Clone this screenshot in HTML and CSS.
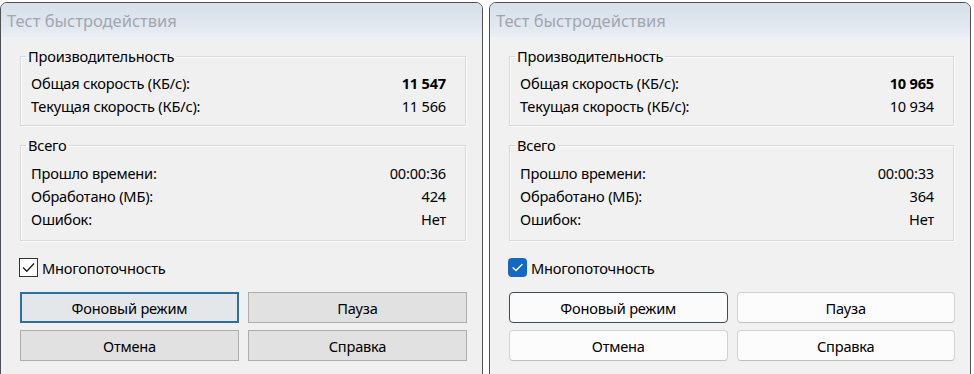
FILE: index.html
```html
<!DOCTYPE html>
<html lang="ru">
<head>
<meta charset="utf-8">
<title>Тест быстродействия</title>
<link rel="stylesheet" href="styles.css">
</head>
<body>
<div class="screen">
  <section class="win classic">
    <header class="titlebar">Тест быстродействия</header>
    <div class="client">
      <fieldset class="group g1">
        <legend>Производительность</legend>
        <div class="row"><span>Общая скорость (КБ/с):</span><b>11 547</b></div>
        <div class="row"><span>Текущая скорость (КБ/с):</span><span>11 566</span></div>
      </fieldset>
      <fieldset class="group g2">
        <legend>Всего</legend>
        <div class="row"><span>Прошло времени:</span><span>00:00:36</span></div>
        <div class="row"><span>Обработано (МБ):</span><span>424</span></div>
        <div class="row"><span>Ошибок:</span><span>Нет</span></div>
      </fieldset>
      <div class="check">
        <span class="box"><svg viewBox="0 0 19 19" width="19" height="19"><path d="M4 9.5 L7.8 13.3 L15 5.5" fill="none" stroke="#1a1a1a" stroke-width="1.3"/></svg></span>
        <span>Многопоточность</span>
      </div>
      <div class="buttons">
        <button class="btn focus">Фоновый режим</button>
        <button class="btn">Пауза</button>
        <button class="btn">Отмена</button>
        <button class="btn">Справка</button>
      </div>
    </div>
  </section>
  <section class="win modern">
    <header class="titlebar">Тест быстродействия</header>
    <div class="client">
      <fieldset class="group g1">
        <legend>Производительность</legend>
        <div class="row"><span>Общая скорость (КБ/с):</span><b>10 965</b></div>
        <div class="row"><span>Текущая скорость (КБ/с):</span><span>10 934</span></div>
      </fieldset>
      <fieldset class="group g2">
        <legend>Всего</legend>
        <div class="row"><span>Прошло времени:</span><span>00:00:33</span></div>
        <div class="row"><span>Обработано (МБ):</span><span>364</span></div>
        <div class="row"><span>Ошибок:</span><span>Нет</span></div>
      </fieldset>
      <div class="check">
        <span class="box"><svg viewBox="0 0 19 19" width="19" height="19"><path d="M5 9.8 L8 12.6 L14 6.4" fill="none" stroke="#ffffff" stroke-width="1.4" stroke-linecap="round" stroke-linejoin="round"/></svg></span>
        <span>Многопоточность</span>
      </div>
      <div class="buttons">
        <button class="btn focus">Фоновый режим</button>
        <button class="btn">Пауза</button>
        <button class="btn">Отмена</button>
        <button class="btn">Справка</button>
      </div>
    </div>
  </section>
</div>
</body>
</html>
```

FILE: styles.css
```css
html, body {
  margin: 0;
  padding: 0;
  background: #ffffff;
}
body {
  width: 974px;
  height: 374px;
  overflow: hidden;
  font-family: "Noto Sans", "Liberation Sans", sans-serif;
  font-size: 14.6px;
  letter-spacing: -0.2px;
  color: #000;
}
.screen {
  display: flex;
  gap: 6px;
  padding-top: 2px;
  height: 372px;
}
.win {
  box-sizing: border-box;
  height: 380px;
  border: 1px solid #4d5156;
  border-radius: 7px 7px 0 0;
  background: #f0f0f0;
  overflow: hidden;
}
.win.classic { width: 483px; }
.win.modern { width: 482px; background: #f1f1f1; }
.titlebar {
  height: 35px;
  box-sizing: border-box;
  padding: 6px 0 0 6px;
  font-size: 16.5px;
  letter-spacing: 0;
  line-height: 24px;
  color: #a0a7b0;
  background: linear-gradient(#d7dfea, #e2e8f0 70%, #eaeff5);
  border-bottom: 1px solid #eef2f7;
}
.client {
  padding: 8px 16px 0 19px;
}
.group {
  margin: 0;
  padding: 6px 19px 7px 10px;
  border: 1px solid #d9d9d9;
  box-shadow: inset 1px 1px 0 #fcfcfc, 1px 1px 0 #fcfcfc;
  min-width: 0;
}
.group legend {
  margin-left: -5px;
  padding: 0 2px;
  line-height: 20px;
}
.group.g2 {
  margin-top: 9px;
  padding-top: 7px;
  padding-bottom: 9px;
}
.row {
  display: flex;
  justify-content: space-between;
  height: 23px;
  line-height: 23px;
}
.row b { font-weight: 700; }
.check {
  display: flex;
  align-items: center;
  gap: 4px;
  margin-top: 17px;
  margin-left: -1px;
  height: 19px;
}
.box {
  display: block;
  width: 19px;
  height: 19px;
  box-sizing: border-box;
}
.box svg { display: block; }
.classic .box {
  border: 1px solid #333;
  background: #fff;
}
.classic .box svg { margin: -1px; }
.modern .box {
  background: #1467c2;
  border-radius: 4px;
}
.buttons {
  display: grid;
  grid-template-columns: 1fr 1fr;
  column-gap: 9px;
  row-gap: 7px;
  margin-top: 15px;
  margin-right: -1px;
}
.btn {
  height: 31px;
  font: inherit;
  letter-spacing: inherit;
  color: #000;
  padding: 0;
  box-sizing: border-box;
}
.classic .btn {
  background: #e1e1e1;
  border: 1px solid #adadad;
}
.classic .btn.focus {
  border: 2px solid #2f6f9f;
  background: #e3e7ea;
}
.modern .btn {
  background: #fcfcfc;
  border: 1px solid #d3d3d3;
  border-bottom-color: #c0c0c0;
  border-radius: 4px;
}
.modern .btn.focus {
  border: 1px solid #3a4c5e;
  background: #fbfbfb;
}
```
